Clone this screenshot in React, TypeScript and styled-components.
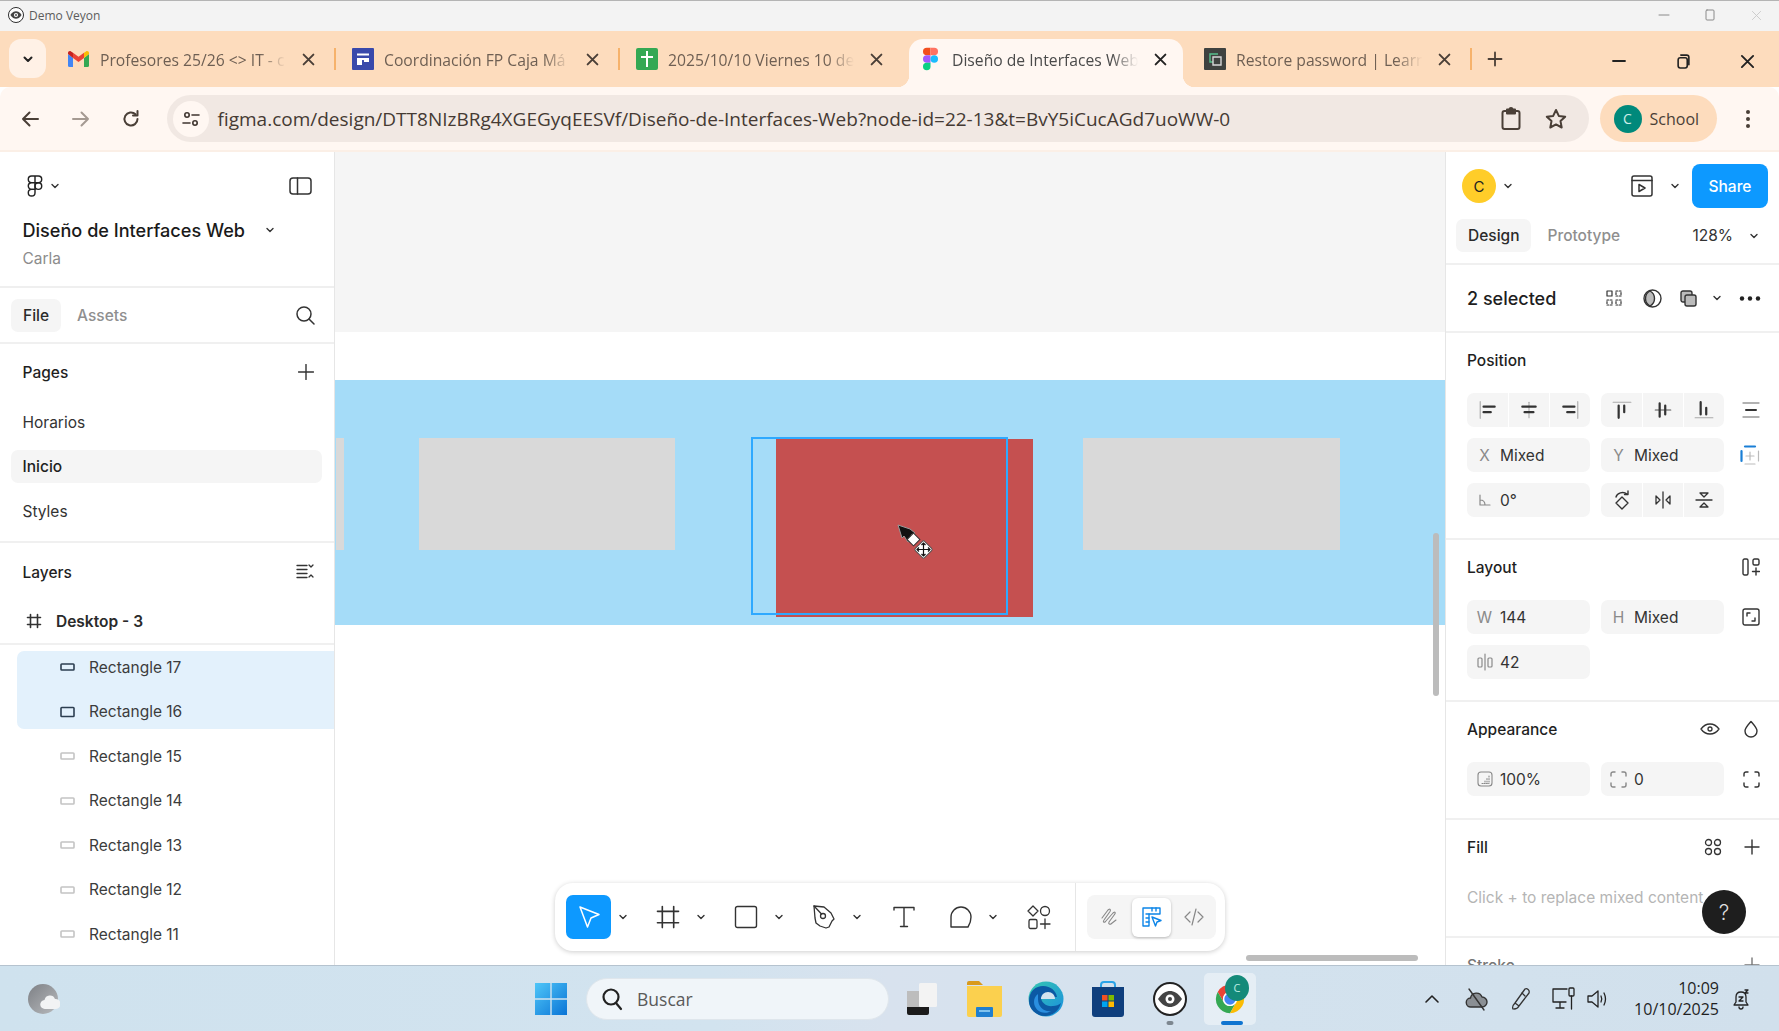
import React from "react";
import styled, { createGlobalStyle } from "styled-components";

const Global = createGlobalStyle`
  html, body { margin: 0; padding: 0; overflow: hidden; background: #fff; }
  * { box-sizing: border-box; }
  svg { display: block; flex-shrink: 0; }
`;

const Page = styled.div`
  width: 1779px; height: 1031px; display: flex; flex-direction: column; overflow: hidden;
  font-family: Inter, "Liberation Sans", sans-serif; color: #1e1e1e;
`;

/* ---------- window title ---------- */
const TitleBar = styled.div`
  height: 31px; flex: none; background: #f3f3f3; border-top: 1px solid #b4b4b4;
  display: flex; align-items: center; padding: 0 0 2px 8px;
  font: 12px "Open Sans", sans-serif; color: #5c5c5c;
`;
const TitleText = styled.span` margin-left: 5px; `;
const TitleControls = styled.div` margin-left: auto; display: flex; `;
const TitleControl = styled.div`
  width: 46px; height: 24px; display: flex; align-items: center; justify-content: center;
`;

/* ---------- tabs ---------- */
const TabStrip = styled.div`
  height: 56px; flex: none; background: #fddcbd; display: flex; align-items: flex-end;
  padding-left: 9px; font-family: "Open Sans", sans-serif;
`;
const TabListButton = styled.div`
  width: 37px; height: 39px; margin: 0 5px 9px 0; border-radius: 12px; background: #fff1e6;
  display: flex; align-items: center; justify-content: center;
`;
const Tab = styled.div<{ $active?: boolean; $sep?: boolean }>`
  position: relative; height: 48px; padding-bottom: 8px; display: flex; align-items: center;
  width: ${p => (p.$active ? 274 : 284)}px;
  padding-left: ${p => (p.$active ? 11 : 17)}px;
  margin: ${p => (p.$active ? "0 4px 0 6px" : "0")};
  background: ${p => (p.$active ? "#fff7f2" : "transparent")};
  border-radius: ${p => (p.$active ? "14px 14px 0 0" : "0")};
  ${p => p.$sep && `&::after { content: ""; position: absolute; right: -1px; top: 9px; width: 2px; height: 22px; background: #f6b26b; }`}
  ${p => p.$active && `
    &::before { content: ""; position: absolute; left: -12px; bottom: 0; width: 12px; height: 12px;
      background: radial-gradient(circle at 0 0, transparent 12px, #fff7f2 12.5px); }
    &::after { content: ""; position: absolute; right: -12px; bottom: 0; width: 12px; height: 12px;
      background: radial-gradient(circle at 100% 0, transparent 12px, #fff7f2 12.5px); }
  `}
`;
const TabIconSlot = styled.div`
  width: 21px; height: 22px; margin-right: 11px; display: flex; align-items: center; justify-content: center;
`;
const TabLabel = styled.div<{ $active?: boolean }>`
  width: 190px; margin-right: 8px; padding-top: 2px; white-space: nowrap; overflow: hidden; font-size: 15.7px;
  color: ${p => (p.$active ? "#4a4a4a" : "#6e5f53")};
  -webkit-mask-image: linear-gradient(to right, #000 84%, transparent 98%);
  mask-image: linear-gradient(to right, #000 84%, transparent 98%);
`;
const TabClose = styled.div` width: 20px; display: flex; justify-content: center; `;
const NewTab = styled.div`
  width: 48px; height: 48px; padding-bottom: 8px; display: flex; align-items: center; justify-content: center;
`;
const WindowControls = styled.div` margin-left: auto; display: flex; align-self: stretch; `;
const WindowControl = styled.div`
  width: 64px; height: 100%; padding-top: 4px; display: flex; align-items: center; justify-content: center;
`;

/* ---------- address bar ---------- */
const NavBar = styled.div`
  height: 65px; flex: none; background: #fff7f2; border-bottom: 2px solid #fbefe6;
  display: flex; align-items: center; padding-left: 5px; font-family: "Open Sans", sans-serif;
  border-radius: 10px 10px 0 0;
`;
const NavButton = styled.div`
  width: 50.5px; display: flex; justify-content: center;
`;
const AddressPill = styled.div`
  width: 1422px; height: 47px; margin-left: 10px; border-radius: 24px; background: #f1e8e3;
  display: flex; align-items: center; padding: 0 21px 0 6px;
`;
const SiteInfo = styled.div`
  width: 36px; height: 36px; border-radius: 50%; background: #fff7f2;
  display: flex; align-items: center; justify-content: center; margin-right: 9px;
`;
const UrlText = styled.div`
  font-size: 19px; color: #453a33; white-space: nowrap;
`;
const AddressActions = styled.div` margin-left: auto; display: flex; gap: 21px; `;
const ProfilePill = styled.div`
  width: 117px; height: 47px; margin-left: 11px; border-radius: 24px; background: #fddcbd;
  display: flex; align-items: center; padding-left: 14px; gap: 8px; font-size: 16px; color: #4a3f37;
`;
const ProfileAvatar = styled.div`
  width: 28px; height: 28px; border-radius: 50%; background: #00897b; color: #cdeee8;
  display: flex; align-items: center; justify-content: center; font-size: 14px;
`;
const MoreButton = styled.div` flex: 1; display: flex; justify-content: center; `;

/* ---------- workspace ---------- */
const Workspace = styled.div` height: 813px; flex: none; display: flex; overflow: hidden; `;

const Sidebar = styled.aside`
  width: 335px; flex: none; border-right: 1px solid #e6e6e6; background: #fff; font-size: 15.5px;
`;
const SidebarHeader = styled.div`
  height: 136px; border-bottom: 2px solid #efefef; padding: 14px 22.5px 0;
`;
const LogoRow = styled.div` height: 40px; display: flex; align-items: center; padding-left: 4px; `;
const LogoCaretGap = styled.div` width: 7px; `;
const TitleCaretGap = styled.div` width: 20px; `;
const Spacer = styled.div` flex: 1; `;
const FileTitleRow = styled.div`
  height: 28px; margin-top: 10px; display: flex; align-items: center; font-size: 18.1px; font-weight: 500; color: #1a1a1a;
`;
const FileOwner = styled.div` height: 24px; margin-top: 3px; line-height: 24px; font-size: 15.5px; color: #8c8c8c; `;
const SidebarTabs = styled.div`
  height: 56px; border-bottom: 2px solid #f0f0f0; padding: 0 19px 0 11px; display: flex; align-items: center; gap: 4px;
`;
const PanelTab = styled.div<{ $active?: boolean }>`
  height: 33px; padding: 0 12px; border-radius: 7px; display: flex; align-items: center;
  font-size: 15.5px; font-weight: 500;
  background: ${p => (p.$active ? "#f5f5f5" : "transparent")};
  color: ${p => (p.$active ? "#2b2b2b" : "#8f8f8f")};
`;
const PagesSection = styled.div` height: 199px; border-bottom: 2px solid #f0f0f0; `;
const SectionHeader = styled.div<{ $h: number }>`
  height: ${p => p.$h}px; padding: 0 20px 0 22.5px; display: flex; align-items: center; justify-content: space-between;
  font-weight: 500; color: #1f1f1f;
`;
const PageRow = styled.div` height: 44.5px; padding: 0 12px 0 11px; display: flex; align-items: center; `;
const PageLabel = styled.div<{ $active?: boolean }>`
  flex: 1; height: 33px; padding-left: 11.5px; border-radius: 7px; display: flex; align-items: center;
  background: ${p => (p.$active ? "#f5f5f5" : "transparent")};
  font-weight: ${p => (p.$active ? 500 : 400)};
  color: ${p => (p.$active ? "#1f1f1f" : "#333")};
`;
const FrameRow = styled.div`
  height: 44px; padding: 0 0 2px 26px; border-bottom: 2px solid #f0f0f0; display: flex; align-items: center; gap: 14px;
  font-weight: 600; color: #2a2a2a;
`;
const SelectedGroup = styled.div`
  height: 78px; margin: 5.5px 0 5.5px 17px; background: #e3f1fc; border-radius: 7px 0 0 7px;
  display: flex; flex-direction: column; justify-content: center;
`;
const LayerRow = styled.div<{ $inGroup?: boolean }>`
  height: 44.5px; flex: none; display: flex; align-items: center; gap: 14px; color: #3c3c3c;
  padding-left: ${p => (p.$inGroup ? 43 : 60)}px;
`;

/* ---------- canvas ---------- */
const Canvas = styled.main` flex: 1; position: relative; overflow: hidden; background: #fff; display: flex; flex-direction: column; `;
const OutOfFrame = styled.div` height: 180px; flex: none; background: #f5f5f5; `;
const FrameGap = styled.div` height: 48px; flex: none; background: #fff; `;
const BlueBand = styled.div` height: 245px; flex: none; background: #a5dcf8; `;
const CanvasRect = styled.div<{ $x: number; $y: number; $w: number; $h: number; $fill: string }>`
  position: absolute; left: ${p => p.$x}px; top: ${p => p.$y}px; width: ${p => p.$w}px; height: ${p => p.$h}px;
  background: ${p => p.$fill};
`;
const SelectionBox = styled.div`
  position: absolute; left: 416px; top: 285px; width: 257px; height: 178px; border: 2px solid #2ea9ff;
`;
const DragCursor = styled.div` position: absolute; left: 560px; top: 370px; `;
const ScrollV = styled.div`
  position: absolute; left: 1098px; top: 381px; width: 6px; height: 163px; border-radius: 3px; background: #bcbcbc;
`;
const ScrollH = styled.div`
  position: absolute; left: 911px; top: 803px; width: 172px; height: 6px; border-radius: 3px; background: #bcbcbc;
`;

const ToolBar = styled.div`
  position: absolute; left: 220px; top: 731px; width: 670px; height: 68px; background: #fff; border-radius: 18px;
  box-shadow: 0 1px 5px rgba(0,0,0,.2); display: flex; align-items: center; padding-left: 11px; gap: 16px;
`;
const ToolGroup = styled.div` display: flex; align-items: center; gap: 4px; `;
const Tool = styled.div<{ $active?: boolean; $nudge?: number }>`
  width: ${p => (p.$active ? 45 : 42)}px; height: 44px; border-radius: 7px;
  background: ${p => (p.$active ? "#0d99ff" : "transparent")};
  display: flex; align-items: center; justify-content: center;
  padding-left: ${p => p.$nudge ?? 0}px;
`;
const ToolCaret = styled.div` width: 16px; display: flex; justify-content: center; `;
const ModeSection = styled.div`
  margin-left: auto; height: 100%; border-left: 1px solid #e6e6e6; padding: 0 13px 0 11px; display: flex; align-items: center;
`;
const ModeSwitch = styled.div`
  width: 129px; height: 44px; background: #f5f5f5; border-radius: 8px; display: flex; align-items: center; justify-content: space-between; padding: 0 3px;
`;
const ModeItem = styled.div<{ $active?: boolean }>`
  width: 39px; height: 39px; border-radius: 6px; display: flex; align-items: center; justify-content: center;
  background: ${p => (p.$active ? "#fff" : "transparent")};
  box-shadow: ${p => (p.$active ? "0 1px 3px rgba(0,0,0,.25)" : "none")};
`;

/* ---------- right panel ---------- */
const RightPanel = styled.aside`
  width: 334px; flex: none; border-left: 1px solid #e6e6e6; background: #fff; position: relative; font-size: 15.5px;
  display: flex; flex-direction: column;
`;
const PanelTop = styled.div`
  height: 68px; flex: none; display: flex; align-items: center; padding: 0 11px 0 16px;
`;
const UserAvatar = styled.div`
  width: 34px; height: 34px; border-radius: 50%; background: #ffcd29; display: flex; align-items: center; justify-content: center;
  font-size: 15px; color: #222; margin-right: 7px;
`;
const PresentButton = styled.div` margin-left: auto; margin-right: 17px; `;
const ShareButton = styled.div`
  width: 76px; height: 44px; margin-left: 12px; border-radius: 8px; background: #0d99ff; color: #fff;
  display: flex; align-items: center; justify-content: center; font-size: 15.5px; font-weight: 500;
`;
const PanelTabs = styled.div`
  height: 45px; flex: none; border-bottom: 2px solid #f0f0f0; padding: 0 20px 12px 10px; display: flex; align-items: center; gap: 4px;
`;
const ZoomValue = styled.div` margin-left: auto; display: flex; align-items: center; gap: 16px; color: #333; `;
const SelectedRow = styled.div`
  height: 68px; flex: none; border-bottom: 2px solid #f0f0f0; display: flex; align-items: center; padding: 0 18px 0 21px;
  font-size: 18px; font-weight: 500;
`;
const SelectedActions = styled.div` margin-left: auto; display: flex; align-items: center; gap: 18px; `;
const ActionCaret = styled.div` display: flex; margin-left: -3px; margin-right: -1px; `;
const PropSection = styled.section<{ $h: number }>`
  height: ${p => p.$h}px; flex: none; border-bottom: 2px solid #f0f0f0; padding: 0 19px 0 21px;
`;
const PropTitle = styled.div`
  height: 54px; margin-bottom: 6px; display: flex; align-items: center; justify-content: space-between; font-weight: 500; color: #1f1f1f;
`;
const HeaderIcons = styled.div` display: flex; align-items: center; gap: 22px; `;
const PropGrid = styled.div`
  display: grid; grid-template-columns: 123px 123px 1fr; grid-auto-rows: 34px; gap: 11px; align-items: center;
`;
const Field = styled.div`
  height: 34px; background: #f5f5f5; border-radius: 7px; display: flex; align-items: center; color: #333;
`;
const FieldLabel = styled.div`
  width: 33px; flex: none; display: flex; justify-content: center; padding-left: 2px; color: #8a8a8a;
`;
const ButtonGroup = styled.div`
  height: 34px; background: #f5f5f5; border-radius: 7px; display: grid; grid-template-columns: repeat(3, 1fr);
`;
const GroupCell = styled.div`
  display: flex; align-items: center; justify-content: center; border-left: 1px solid #fff;
  &:first-child { border-left: 0; }
`;
const EndIcon = styled.div` display: flex; justify-content: flex-end; `;
const PlaceholderText = styled.div`
  height: 34px; display: flex; align-items: center; color: #b5b5b5; white-space: nowrap;
`;
const HelpButton = styled.div`
  position: absolute; left: 256px; top: 738px; width: 44px; height: 44px; border-radius: 50%; background: #1e1e1e;
  color: #ddd; display: flex; align-items: center; justify-content: center; font-size: 21px; font-weight: 300;
`;
const StrokeTitle = styled(PropTitle)` color: #777; `;

/* ---------- taskbar ---------- */
const TaskBar = styled.footer`
  height: 66px; flex: none; border-top: 1px solid #b5c3cf;
  background: linear-gradient(90deg, #cfe2ee 0%, #d2e3ef 40%, #d8e2ee 50%, #d3e2ee 70%, #d1e0ec 100%);
  display: flex; align-items: center; font-family: "Open Sans", sans-serif; position: relative;
`;
const WeatherSlot = styled.div` margin-left: 28px; width: 32px; margin-right: 475px; `;
const StartSlot = styled.div` width: 32px; margin-right: 19px; `;
const SearchPill = styled.div`
  width: 303px; height: 42px; margin-right: 2px; border-radius: 21px; background: #f0f5f9; border: 1px solid #dfe6ec; display: flex; align-items: center;
  padding-left: 13px; gap: 13px; font-size: 17.5px; color: #5a5a5a;
`;
const TaskSlot = styled.div`
  position: relative; width: 62px; height: 52px; display: flex; align-items: center; justify-content: center;
`;
const ActiveTile = styled.div`
  position: absolute; left: 3px; top: 0; width: 52px; height: 52px; border-radius: 5px; background: rgba(255,255,255,.42);
`;
const Indicator = styled.div<{ $w: number; $c: string }>`
  position: absolute; bottom: 0; left: 50%; transform: translateX(-50%); width: ${p => p.$w}px; height: 4px; border-radius: 2px; background: ${p => p.$c};
`;
const ChromeBadge = styled.div`
  position: absolute; left: 24px; top: 2px; width: 24px; height: 26px; border-radius: 50%; background: #148a79; color: #bdeee4;
  font-size: 11px; display: flex; align-items: center; justify-content: center;
`;
const IconLayer = styled.div` position: relative; margin-left: -4px; `;
const Tray = styled.div` position: absolute; left: 1409px; top: 0; height: 100%; display: flex; align-items: center; `;
const TraySlot = styled.div<{ $w: number }>` width: ${p => p.$w}px; display: flex; justify-content: center; `;
const Clock = styled.div`
  width: 110px; text-align: right; font-size: 16px; line-height: 21px; color: #1f1f1f;
`;

/* ---------- icons ---------- */
type P = { s?: number; c?: string; w?: number; vb?: string; children?: React.ReactNode; h?: number };
const Ic = ({ s = 20, h, c = "#333", w = 1.5, vb = "0 0 20 20", children }: P) => (
  <svg width={s} height={h ?? s} viewBox={vb} fill="none" stroke={c} strokeWidth={w} strokeLinecap="round" strokeLinejoin="round">{children}</svg>
);
const Caret = ({ c = "#333" }: { c?: string }) => (
  <Ic s={10} c={c} vb="0 0 10 10" w={1.4}><path d="M2 3.5 5 6.5 8 3.5" /></Ic>
);
const Cross = ({ s = 13, c = "#4a3f37", w = 1.8 }: { s?: number; c?: string; w?: number }) => (
  <Ic s={s} c={c} w={w} vb="0 0 12 12"><path d="M1.5 1.5 10.5 10.5M10.5 1.5 1.5 10.5" /></Ic>
);
const Gmail = () => (
  <svg width="21" height="16" viewBox="0 0 21 16">
    <path d="M0 3v11.5A1.5 1.5 0 0 0 1.500 16H5V7z" fill="#4285f4" />
    <path d="M21 3v11.5a1.500 1.500 0 0 1-1.500 1.500H16V7z" fill="#34a853" />
    <path d="M0 3 5 7V1.800L3 .4C1.600-.5 0 .5 0 2z" fill="#c5221f" />
    <path d="M5 1.800V7l5.500 4L16 7V1.800l-5.500 4z" fill="#ea4335" />
    <path d="M16 1.800V7l5-4V2c0-1.500-1.600-2.500-3-1.600z" fill="#fbbc04" />
  </svg>
);
const FormsFav = () => (
  <svg width="22" height="22" viewBox="0 0 22 22"><rect width="22" height="22" rx="1" fill="#3949ab" /><path d="M5 5.500h12v2H5zM5 10h12v2.300H5zM5 10h5v7H5zM12 10h5v4h-5z" fill="#fff" /><rect x="10" y="12.300" width="2" height="5" fill="#3949ab" /></svg>
);
const SheetFav = () => (
  <svg width="22" height="22" viewBox="0 0 22 22"><rect width="22" height="22" rx="2" fill="#34a853" /><path d="M10 3h2v5h5v2h-5v9h-2v-9H5V8h5z" fill="#fff" /></svg>
);
const FigmaFav = () => (
  <svg width="15" height="24" viewBox="0 0 16 24">
    <path d="M8 0H4a4 4 0 0 0 0 8h4z" fill="#f24e1e" />
    <path d="M8 0h4a4 4 0 0 1 0 8H8z" fill="#ff7262" />
    <path d="M8 8H4a4 4 0 0 0 0 8h4z" fill="#a259ff" />
    <circle cx="12" cy="12" r="4" fill="#1abcfe" />
    <path d="M4 16h4v4a4 4 0 1 1-4-4z" fill="#0acf83" />
  </svg>
);
const LearnFav = () => (
  <svg width="22" height="22" viewBox="0 0 22 22"><rect width="22" height="22" rx="1" fill="#3f4240" /><path d="M14 6H6v8h3" fill="none" stroke="#58c08d" strokeWidth="1.400" /><path d="M9 9h8v8H9z" fill="none" stroke="#d7d7d7" strokeWidth="1.400" /></svg>
);
const FigmaOutline = () => (
  <Ic s={16} h={23} c="#222" vb="0 0 16 24" w={1.5}>
    <path d="M8 1H4.500a3.500 3.500 0 0 0 0 7H8zM8 1h3.500a3.500 3.500 0 0 1 0 7H8zM8 8H4.500a3.500 3.500 0 0 0 0 7H8z" />
    <circle cx="11.500" cy="11.500" r="3.500" />
    <path d="M4.500 15H8v3.500a3.500 3.500 0 1 1-3.500-3.500z" />
  </Ic>
);
const LayerRect = ({ dark, tall }: { dark?: boolean; tall?: boolean }) => (
  <Ic s={15} h={12} c={dark ? "#2c3e50" : "#c4c4c4"} w={1.6} vb="0 0 15 12"><rect x="1" y={tall ? 1.5 : 3} width="13" height={tall ? 9 : 6} rx="0.8" /></Ic>
);
const Hash = ({ s = 18, c = "#333", w = 1.6 }: { s?: number; c?: string; w?: number }) => (
  <Ic s={s} c={c} w={w} vb="0 0 16 16"><path d="M4.500 1.500v13M11.500 1.500v13M1.500 4.500h13M1.500 11.500h13" /></Ic>
);
const AlignBar = ({ kind }: { kind: string }) => {
  const t: Record<string, React.ReactNode> = {
    left: <><path d="M2 1.500v15" stroke="#aaa" /><path d="M5 6h10M5 11h6.500" strokeWidth="2" /></>,
    cx: <><path d="M9 2v14" stroke="#aaa" /><path d="M3 6h12M5 11h8" strokeWidth="2" /></>,
    right: <><path d="M16 1.500v15" stroke="#aaa" /><path d="M3 6h10M6.500 11H13" strokeWidth="2" /></>,
    top: <><path d="M1 2h16" stroke="#aaa" /><path d="M6 5v11M11 5v6" strokeWidth="2" /></>,
    cy: <><path d="M2 9h14" stroke="#555" /><path d="M6 3v12M11 5v8" strokeWidth="2" /></>,
    bottom: <><path d="M1 16h16" stroke="#aaa" /><path d="M6 2v11M11 7v6" strokeWidth="2" /></>,
  };
  return <Ic s={20} c="#333" w={1} vb="0 0 18 18">{t[kind]}</Ic>;
};
const ChromeIcon = () => (
  <svg width="34" height="34" viewBox="0 0 48 48">
    <path d="M24 4A20 20 0 0 1 41.320 14H24A10 10 0 0 0 15.340 29L6.680 14A20 20 0 0 1 24 4Z" fill="#ea4335" />
    <path d="M6.680 14 15.340 29A10 10 0 0 0 32.660 29L24 44A20 20 0 0 1 6.680 14Z" fill="#34a853" />
    <path d="M24 44 32.660 29A10 10 0 0 0 24 14H41.320A20 20 0 0 1 24 44Z" fill="#fbbc04" />
    <circle cx="24" cy="24" r="10" fill="#fff" /><circle cx="24" cy="24" r="8" fill="#4285f4" />
  </svg>
);
const VeyonEye = ({ s = 34 }: { s?: number }) => (
  <svg width={s} height={s} viewBox="0 0 34 34">
    <circle cx="17" cy="17" r="16" fill="#fff" stroke="#222" strokeWidth="2" />
    <path d="M5 17c4-6 8-8 12-8s8 2 12 8c-4 6-8 8-12 8s-8-2-12-8z" fill="#444" />
    <circle cx="17" cy="17" r="4.500" fill="#fff" /><circle cx="17" cy="17" r="2" fill="#444" />
  </svg>
);

const tabs = [
  { icon: <Gmail />, label: "Profesores 25/26 <> IT - c", sep: true },
  { icon: <FormsFav />, label: "Coordinación FP Caja Má", sep: true },
  { icon: <SheetFav />, label: "2025/10/10 Viernes 10 de", sep: false },
  { icon: <FigmaFav />, label: "Diseño de Interfaces Web", active: true },
  { icon: <LearnFav />, label: "Restore password | Learni", sep: true },
];
const layers = [15, 14, 13, 12, 11];

export default function App() {
  return (
    <Page>
      <Global />
      <TitleBar>
        <VeyonEye s={16} />
        <TitleText>Demo Veyon</TitleText>
        <TitleControls>
          <TitleControl><Ic s={12} c="#8a8a8a" w={1} vb="0 0 12 12"><path d="M1 6h10" /></Ic></TitleControl>
          <TitleControl><Ic s={12} c="#8a8a8a" w={1} vb="0 0 12 12"><rect x="2" y="1" width="8" height="10" rx="1" /></Ic></TitleControl>
          <TitleControl><Cross s={11} c="#c9c9c9" w={1} /></TitleControl>
        </TitleControls>
      </TitleBar>

      <TabStrip>
        <TabListButton><Ic s={12} c="#222" w={2} vb="0 0 12 12"><path d="M2.500 4.500 6 8l3.500-3.500" /></Ic></TabListButton>
        {tabs.map(t => (
          <Tab key={t.label} $active={t.active} $sep={t.sep}>
            <TabIconSlot>{t.icon}</TabIconSlot>
            <TabLabel $active={t.active}>{t.label}</TabLabel>
            <TabClose><Cross c={t.active ? "#222" : "#4a3f37"} /></TabClose>
          </Tab>
        ))}
        <NewTab><Ic s={16} c="#4a3f37" w={1.8} vb="0 0 16 16"><path d="M8 1.500v13M1.500 8h13" /></Ic></NewTab>
        <WindowControls>
          <WindowControl><Ic s={14} c="#222" w={1.8} vb="0 0 14 14"><path d="M1 7h12" /></Ic></WindowControl>
          <WindowControl><Ic s={15} c="#222" w={1.5} vb="0 0 14 14"><rect x="2" y="3.500" width="8.500" height="9.500" rx="2" /><path d="M4.500 1h5.500a2 2 0 0 1 2 2v7" /></Ic></WindowControl>
          <WindowControl><Cross s={15} c="#222" w={1.5} /></WindowControl>
        </WindowControls>
      </TabStrip>

      <NavBar>
        <NavButton><Ic s={20} c="#4a3f37" w={2} vb="0 0 20 20"><path d="M18 10H3M9.500 3.500 3 10l6.500 6.500" /></Ic></NavButton>
        <NavButton><Ic s={20} c="#a59a92" w={2} vb="0 0 20 20"><path d="M2 10h15M10.500 3.500 17 10l-6.500 6.500" /></Ic></NavButton>
        <NavButton><Ic s={20} c="#4a3f37" w={2} vb="0 0 20 20"><path d="M16.500 10a6.500 6.500 0 1 1-2-4.700" /><path d="M16.500 2v4.500H12" /></Ic></NavButton>
        <AddressPill>
          <SiteInfo>
            <Ic s={20} c="#3f352f" w={1.6} vb="0 0 20 20"><circle cx="6" cy="6" r="2.200" /><path d="M11 6h7M2 14h7" /><circle cx="14" cy="14" r="2.200" /></Ic>
          </SiteInfo>
          <UrlText>figma.com/design/DTT8NIzBRg4XGEGyqEESVf/Diseño-de-Interfaces-Web?node-id=22-13&amp;t=BvY5iCucAGd7uoWW-0</UrlText>
          <AddressActions>
            <Ic s={24} c="#4a3f37" w={2} vb="0 0 24 24"><rect x="3.500" y="4" width="17" height="18" rx="2" /><path d="M8 4V2.500h2.500a1.500 1.500 0 0 1 3 0H16V6.500H8z" fill="#4a3f37" /></Ic>
            <Ic s={24} c="#4a3f37" w={2} vb="0 0 24 24"><path d="m12 3 2.800 5.900 6.400.8-4.700 4.400 1.200 6.400L12 17.400l-5.700 3.100 1.200-6.400-4.700-4.400 6.400-.8z" /></Ic>
          </AddressActions>
        </AddressPill>
        <ProfilePill><ProfileAvatar>C</ProfileAvatar>School</ProfilePill>
        <MoreButton>
          <svg width="4" height="20" viewBox="0 0 4 20" fill="#4a3f37"><circle cx="2" cy="3" r="2" /><circle cx="2" cy="10" r="2" /><circle cx="2" cy="17" r="2" /></svg>
        </MoreButton>
      </NavBar>

      <Workspace>
        <Sidebar>
          <SidebarHeader>
            <LogoRow>
              <FigmaOutline />
              <LogoCaretGap />
              <Caret />
              <Spacer />
              <Ic s={23} h={18} c="#333" w={1.5} vb="0 0 23 18"><rect x="1" y="1" width="21" height="16" rx="3" /><path d="M8.500 1v16" /></Ic>
            </LogoRow>
            <FileTitleRow>Diseño de Interfaces Web<TitleCaretGap /><Caret /></FileTitleRow>
            <FileOwner>Carla</FileOwner>
          </SidebarHeader>
          <SidebarTabs>
            <PanelTab $active>File</PanelTab>
            <PanelTab>Assets</PanelTab>
            <Spacer />
            <Ic s={20} c="#333" w={1.5} vb="0 0 20 20"><circle cx="9" cy="9" r="7" /><path d="m14 14 5 5" /></Ic>
          </SidebarTabs>
          <PagesSection>
            <SectionHeader $h={56}>Pages<Ic s={16} c="#333" w={1.4} vb="0 0 16 16"><path d="M8 .500v15M.5 8h15" /></Ic></SectionHeader>
            <PageRow><PageLabel>Horarios</PageLabel></PageRow>
            <PageRow><PageLabel $active>Inicio</PageLabel></PageRow>
            <PageRow><PageLabel>Styles</PageLabel></PageRow>
          </PagesSection>
          <SectionHeader $h={58}>
            Layers
            <Ic s={18} c="#333" w={1.3} vb="0 0 18 18"><path d="M1 2.500h10M1 6.500h10M1 10.500h10M1 14.500h10M13 2l2 2 2-2M13 14l2-2 2 2" /></Ic>
          </SectionHeader>
          <FrameRow><Hash s={16} c="#333" />Desktop - 3</FrameRow>
          <SelectedGroup>
            <LayerRow $inGroup><LayerRect dark />Rectangle 17</LayerRow>
            <LayerRow $inGroup><LayerRect dark tall />Rectangle 16</LayerRow>
          </SelectedGroup>
          {layers.map(n => <LayerRow key={n}><LayerRect />Rectangle {n}</LayerRow>)}
        </Sidebar>

        <Canvas>
          <OutOfFrame />
          <FrameGap />
          <BlueBand />
          <CanvasRect $x={1} $y={286} $w={8} $h={112} $fill="#d9d9d9" />
          <CanvasRect $x={84} $y={286} $w={256} $h={112} $fill="#d9d9d9" />
          <CanvasRect $x={748} $y={286} $w={257} $h={112} $fill="#d9d9d9" />
          <CanvasRect $x={441} $y={287} $w={257} $h={178} $fill="#c55050" />
          <SelectionBox />
          <DragCursor>
            <svg width="40" height="40" viewBox="0 0 40 40">
              <path d="M3 3 15 7l5 4-4 2 2 5-5 2-4-6-2 2z" fill="#111" stroke="#999" strokeWidth="1" />
              <rect x="14" y="13" width="9" height="9" transform="rotate(45 18.500 17.500)" fill="#fff" stroke="#333" strokeWidth="1" />
              <rect x="22" y="21" width="13" height="13" transform="rotate(45 28.500 27.500)" rx="1.500" fill="#fff" stroke="#555" strokeWidth="1" />
              <path d="M28.500 21v13M22 27.500h13M26.500 23l2-2 2 2M26.500 32l2 2 2-2M24 25.500l-2 2 2 2M33 25.500l2 2-2 2" fill="none" stroke="#111" strokeWidth="1.200" />
            </svg>
          </DragCursor>
          <ScrollV />
          <ScrollH />
          <ToolBar>
            <ToolGroup>
              <Tool $active><Ic s={28} c="#fff" w={1.5} vb="0 0 28 28"><path d="M5 4 24 11.500l-8 3.500-3.500 9z" /></Ic></Tool>
              <ToolCaret><Caret /></ToolCaret>
            </ToolGroup>
            <ToolGroup>
              <Tool><Hash s={26} c="#333" w={1} /></Tool>
              <ToolCaret><Caret /></ToolCaret>
            </ToolGroup>
            <ToolGroup>
              <Tool><Ic s={24} c="#333" w={1.4} vb="0 0 24 24"><rect x="1.500" y="1.500" width="21" height="21" rx="2" /></Ic></Tool>
              <ToolCaret><Caret /></ToolCaret>
            </ToolGroup>
            <ToolGroup>
              <Tool><Ic s={26} c="#333" w={1.3} vb="0 0 26 26"><path d="m3 2 10 1 7 6 3 6-2 2-3 6-3 1-6-2-4-3-1-5z" /><circle cx="12" cy="12" r="2.500" /><path d="M3 2l7.500 8" /></Ic></Tool>
              <ToolCaret><Caret /></ToolCaret>
            </ToolGroup>
            <ToolGroup>
              <Tool $nudge={4}><Ic s={24} c="#333" w={1.4} vb="0 0 24 24"><path d="M2 5V2.500h20V5M12 2.500v19M8.500 21.500h7" /></Ic></Tool>
            </ToolGroup>
            <ToolGroup>
              <Tool $nudge={2}><Ic s={24} c="#333" w={1.4} vb="0 0 24 24"><path d="M2 22V12A10 10 0 0 1 12 2a10 10 0 0 1 10 10c0 4-1 7-3 10z" /></Ic></Tool>
              <ToolCaret><Caret /></ToolCaret>
            </ToolGroup>
            <ToolGroup>
              <Tool $nudge={2}><Ic s={26} c="#333" w={1.3} vb="0 0 26 26"><path d="m7 2 5 5-5 5-5-5z" /><circle cx="19" cy="7" r="4.500" /><rect x="3" y="15.500" width="8" height="9" rx="1.500" /><path d="M19 15v9.500M14.500 20h9.500" /></Ic></Tool>
            </ToolGroup>
            <ModeSection>
              <ModeSwitch>
                <ModeItem><Ic s={22} c="#888" w={1.1} vb="0 0 22 22"><path d="M3 12 9 4c2-2 3 0 2 1.500L5 14c-1.500 2 0 3 1.500 1.500L14 7c2-2 3 0 1.500 1.500L10 16c-1 2 1 3 2.500 1.500L17 14" /></Ic></ModeItem>
                <ModeItem $active>
                  <Ic s={24} c="#0d85e8" w={1.4} vb="0 0 24 24"><path d="M3 3h17v6H9v12H3z" /><path d="M6 9h3M6 13h3M6 17h3M12 3v3M16 3v3M12 12l9 3.500-4 1.500-1.500 4z" /></Ic>
                </ModeItem>
                <ModeItem><Ic s={22} c="#888" w={1.2} vb="0 0 22 22"><path d="M7 6 2 11l5 5M15 6l5 5-5 5M13 3 9 19" /></Ic></ModeItem>
              </ModeSwitch>
            </ModeSection>
          </ToolBar>
        </Canvas>

        <RightPanel>
          <PanelTop>
            <UserAvatar>C</UserAvatar>
            <Caret />
            <PresentButton>
              <Ic s={22} c="#333" w={1.5} vb="0 0 22 22"><rect x="1" y="1" width="20" height="20" rx="2" /><path d="M1 5.500h20M8 9.500l6 3.500-6 3.500z" /></Ic>
            </PresentButton>
            <Caret />
            <ShareButton>Share</ShareButton>
          </PanelTop>
          <PanelTabs>
            <PanelTab $active>Design</PanelTab>
            <PanelTab>Prototype</PanelTab>
            <ZoomValue>128%<Caret /></ZoomValue>
          </PanelTabs>
          <SelectedRow>
            2 selected
            <SelectedActions>
              <Ic s={18} c="#333" w={1.2} vb="0 0 18 18"><rect x="2" y="2" width="5" height="5" /><path d="M11 2h5v5h-5zM2 11h5v5H2zM11 11h5v5h-5z" strokeDasharray="1.800 1.500" /></Ic>
              <Ic s={21} c="#333" w={1.4} vb="0 0 21 21"><circle cx="11.500" cy="10.500" r="8.500" /><path d="M9 3a8.500 8.500 0 0 0 0 15 8.500 8.500 0 0 0 0-15z" fill="#bbb" /></Ic>
              <Ic s={17} c="#333" w={1.4} vb="0 0 17 17"><rect x="1" y="1" width="11" height="11" rx="2" fill="#bbb" /><rect x="5" y="5" width="11" height="11" rx="2" fill="#bbb" /></Ic>
              <ActionCaret><Caret /></ActionCaret>
              <svg width="22" height="5" viewBox="0 0 22 5" fill="#222"><circle cx="3" cy="2.500" r="2.200" /><circle cx="11" cy="2.500" r="2.200" /><circle cx="19" cy="2.500" r="2.200" /></svg>
            </SelectedActions>
          </SelectedRow>

          <PropSection $h={207}>
            <PropTitle>Position</PropTitle>
            <PropGrid>
              <ButtonGroup>
                <GroupCell><AlignBar kind="left" /></GroupCell>
                <GroupCell><AlignBar kind="cx" /></GroupCell>
                <GroupCell><AlignBar kind="right" /></GroupCell>
              </ButtonGroup>
              <ButtonGroup>
                <GroupCell><AlignBar kind="top" /></GroupCell>
                <GroupCell><AlignBar kind="cy" /></GroupCell>
                <GroupCell><AlignBar kind="bottom" /></GroupCell>
              </ButtonGroup>
              <EndIcon><Ic s={18} c="#333" w={1.3} vb="0 0 18 18"><path d="M1 2h16M1 16h16" stroke="#999" /><path d="M4 9h10" strokeWidth="2" /></Ic></EndIcon>
              <Field><FieldLabel>X</FieldLabel>Mixed</Field>
              <Field><FieldLabel>Y</FieldLabel>Mixed</Field>
              <EndIcon>
                <Ic s={20} c="#bbb" w={1.2} vb="0 0 20 20"><path d="M10 7v8M6 11h8M5 19h10M18.500 6v10" /><path d="M5 1.500h10" stroke="#1a7fd6" strokeWidth="2.200" /><path d="M1.500 6v10" stroke="#1a7fd6" strokeWidth="2.200" /></Ic>
              </EndIcon>
              <Field>
                <FieldLabel><Ic s={13} c="#8a8a8a" w={1.2} vb="0 0 13 13"><path d="M2 1v10h10M2 6c3 0 5 2 5 5" /></Ic></FieldLabel>0°
              </Field>
              <ButtonGroup>
                <GroupCell><Ic s={20} c="#333" w={1.4} vb="0 0 20 20"><path d="m10 7 6 6-6 6-6-6zM4 7c1-4 7-6 11-3M16 1v3.500h-3.500" /></Ic></GroupCell>
                <GroupCell><Ic s={18} c="#333" w={1.3} vb="0 0 18 18"><path d="M9 1v16M2 5v8l4-4zM16 5v8l-4-4z" /></Ic></GroupCell>
                <GroupCell><Ic s={18} c="#333" w={1.3} vb="0 0 18 18"><path d="M1 9h16M5 2h8L9 6zM5 16h8l-4-4z" /></Ic></GroupCell>
              </ButtonGroup>
            </PropGrid>
          </PropSection>

          <PropSection $h={162}>
            <PropTitle>
              Layout
              <Ic s={18} c="#333" w={1.4} vb="0 0 18 18"><rect x="1" y="1" width="5" height="16" rx="1.500" /><rect x="11" y="1" width="6" height="6" rx="1.500" /><path d="M14 10v7M10.500 13.500h7" /></Ic>
            </PropTitle>
            <PropGrid>
              <Field><FieldLabel>W</FieldLabel>144</Field>
              <Field><FieldLabel>H</FieldLabel>Mixed</Field>
              <EndIcon><Ic s={18} c="#333" w={1.4} vb="0 0 18 18"><rect x="1" y="1" width="16" height="16" rx="2" /><path d="M5 8V5h3M13 10v3h-3" /></Ic></EndIcon>
              <Field>
                <FieldLabel><Ic s={18} c="#8a8a8a" w={1.2} vb="0 0 18 18"><path d="M9 1v16" /><rect x="2" y="5" width="4" height="9" rx="1" /><rect x="12" y="5" width="4" height="9" rx="1" /></Ic></FieldLabel>42
              </Field>
            </PropGrid>
          </PropSection>

          <PropSection $h={118}>
            <PropTitle>
              Appearance
              <HeaderIcons>
                <Ic s={20} c="#333" w={1.3} vb="0 0 20 20"><path d="M1 10c2.500-3.500 5.500-5 9-5s6.500 1.500 9 5c-2.500 3.500-5.500 5-9 5s-6.500-1.500-9-5z" /><circle cx="10" cy="10" r="2" /></Ic>
                <Ic s={18} c="#333" w={1.4} vb="0 0 18 18"><path d="M9 1.500c3 3.500 6 6.500 6 9.500a6 6 0 0 1-12 0c0-3 3-6 6-9.500z" /></Ic>
              </HeaderIcons>
            </PropTitle>
            <PropGrid>
              <Field>
                <FieldLabel><Ic s={16} c="#888" w={1.1} vb="0 0 16 16"><rect x="1" y="1" width="14" height="14" rx="3" /><path d="M12 5v1M10 7.500v1M12 7.500v1M8 10v1M10 10v1M12 10v1M5 12.500h7" strokeDasharray="1 1.200" /></Ic></FieldLabel>100%
              </Field>
              <Field>
                <FieldLabel><Ic s={17} c="#888" w={1.4} vb="0 0 17 17"><path d="M1 5V3a2 2 0 0 1 2-2h2M12 1h2a2 2 0 0 1 2 2v2M16 12v2a2 2 0 0 1-2 2h-2M5 16H3a2 2 0 0 1-2-2v-2" /></Ic></FieldLabel>0
              </Field>
              <EndIcon><Ic s={17} c="#333" w={1.4} vb="0 0 17 17"><path d="M1 5V3a2 2 0 0 1 2-2h2M12 1h2a2 2 0 0 1 2 2v2M16 12v2a2 2 0 0 1-2 2h-2M5 16H3a2 2 0 0 1-2-2v-2" /></Ic></EndIcon>
            </PropGrid>
          </PropSection>

          <PropSection $h={118}>
            <PropTitle>
              Fill
              <HeaderIcons>
                <Ic s={18} c="#333" w={1.3} vb="0 0 18 18"><circle cx="4.500" cy="4.500" r="3" /><circle cx="13.500" cy="4.500" r="3" /><circle cx="4.500" cy="13.500" r="3" /><circle cx="13.500" cy="13.500" r="3" /></Ic>
                <Ic s={16} c="#333" w={1.4} vb="0 0 16 16"><path d="M8 1v14M1 8h14" /></Ic>
              </HeaderIcons>
            </PropTitle>
            <PlaceholderText>Click + to replace mixed content</PlaceholderText>
          </PropSection>

          <PropSection $h={60}>
            <StrokeTitle>
              Stroke
              <Ic s={16} c="#777" w={1.4} vb="0 0 16 16"><path d="M8 1v14M1 8h14" /></Ic>
            </StrokeTitle>
          </PropSection>

          <HelpButton>?</HelpButton>
        </RightPanel>
      </Workspace>

      <TaskBar>
        <WeatherSlot>
          <svg width="32" height="32" viewBox="0 0 32 32">
            <defs><linearGradient id="wx" x1="0" y1="0" x2="1" y2="1"><stop offset="0" stopColor="#7d8085" /><stop offset="1" stopColor="#b8babd" /></linearGradient></defs>
            <circle cx="15" cy="16" r="15" fill="url(#wx)" />
            <path d="M17 26a4.500 4.500 0 0 1-.5-9A5.500 5.500 0 0 1 27 16a5 5 0 0 1 1 10z" fill="#f2f3f4" />
          </svg>
        </WeatherSlot>
        <StartSlot>
          <svg width="32" height="32" viewBox="0 0 32 32">
            <defs><linearGradient id="win" x1="0" y1="0" x2="1" y2="1"><stop offset="0" stopColor="#4fc6f8" /><stop offset="1" stopColor="#0a74d6" /></linearGradient></defs>
            <path d="M0 0h15.300v15.300H0zM16.700 0H32v15.300H16.700zM0 16.700h15.300V32H0zM16.700 16.700H32V32H16.700z" fill="url(#win)" />
          </svg>
        </StartSlot>
        <SearchPill>
          <Ic s={24} c="#222" w={2.2} vb="0 0 24 24"><circle cx="11" cy="10" r="7.500" /><path d="m16 16 5 6" /></Ic>
          Buscar
        </SearchPill>
        <TaskSlot>
          <svg width="34" height="34" viewBox="0 0 34 34">
            <rect x="2" y="9" width="22" height="24" rx="2" fill="#1b1b1b" />
            <rect x="2" y="9" width="18" height="16" fill="#bdbdbd" />
            <rect x="14" y="1" width="18" height="24" rx="1.500" fill="#f3f3f3" />
          </svg>
        </TaskSlot>
        <TaskSlot>
          <svg width="35" height="36" viewBox="0 0 35 36">
            <path d="M0 2a2 2 0 0 1 2-2h10l4 4h-16z" fill="#d99a1c" />
            <path d="M0 5h35v29a2 2 0 0 1-2 2H2a2 2 0 0 1-2-2z" fill="#fbd04e" />
            <rect x="9" y="26" width="17" height="10" fill="#1f7fd0" rx="1" />
            <rect x="12" y="29" width="11" height="2" fill="#7fc2ee" />
          </svg>
        </TaskSlot>
        <TaskSlot>
          <svg width="36" height="36" viewBox="0 0 36 36">
            <defs><linearGradient id="edge" x1="0" y1="0" x2="1" y2="1"><stop offset="0" stopColor="#36c7b0" /><stop offset="1" stopColor="#1a8fe0" /></linearGradient></defs>
            <circle cx="18" cy="18" r="17.500" fill="url(#edge)" />
            <path d="M1 20C1 10 8 5 15 5c8 0 13 5 14 11H13c0 6 6 10 12 9 3 0 6-1 8-3-2 8-9 13-16 13C8 35 1 28 1 20z" fill="#0c59a4" />
            <path d="M13 18h14c0-4-3-7-7-7s-7 3-7 7z" fill="#d2e3ef" />
            <path d="M10 18c0 8 6 13 13 12-8 5-17-1-17-9 0-3 1-6 4-8z" fill="#2a8fe0" />
          </svg>
        </TaskSlot>
        <TaskSlot>
          <svg width="34" height="36" viewBox="0 0 34 36">
            <path d="M10 7V4a3 3 0 0 1 3-3h8a3 3 0 0 1 3 3v3" fill="none" stroke="#2aa3e8" strokeWidth="2" />
            <path d="M1 6h32v27a3 3 0 0 1-3 3H4a3 3 0 0 1-3-3z" fill="#0f3f7d" />
            <rect x="11" y="14" width="5.500" height="5.500" fill="#f25022" />
            <rect x="17.500" y="14" width="5.500" height="5.500" fill="#7fba00" />
            <rect x="11" y="20.500" width="5.500" height="5.500" fill="#00a4ef" />
            <rect x="17.500" y="20.500" width="5.500" height="5.500" fill="#ffb900" />
          </svg>
        </TaskSlot>
        <TaskSlot>
          <VeyonEye />
          <Indicator $w={7} $c="#7d8790" />
        </TaskSlot>
        <TaskSlot>
          <ActiveTile />
          <IconLayer><ChromeIcon /></IconLayer>
          <ChromeBadge>C</ChromeBadge>
          <Indicator $w={22} $c="#0f74d0" />
        </TaskSlot>
        <Tray>
          <TraySlot $w={45}><Ic s={18} c="#222" w={1.6} vb="0 0 18 18"><path d="m3 12 6-6 6 6" /></Ic></TraySlot>
          <TraySlot $w={44}><Ic s={24} c="#333" w={1.4} vb="0 0 24 24"><path d="M7 20a4.500 4.500 0 0 1-.5-9A6 6 0 0 1 18 10a5 5 0 0 1 0 10z" fill="#8a8f94" /><path d="m5 2 15 21" /></Ic></TraySlot>
          <TraySlot $w={43}><Ic s={24} c="#333" w={1.3} vb="0 0 24 24"><path d="M17 2c2-1 5 1 4 4L11 19l-4-3zM7 16c-2 2-3 4-2 6M11 19c-1 2-3 3-5 3" /><path d="M14 6l3 3" /></Ic></TraySlot>
          <TraySlot $w={44}><Ic s={24} c="#222" w={1.3} vb="0 0 24 24"><path d="M15 15H2V2h14M9 15v5M5 21h8" /><rect x="18" y="1" width="5" height="8" rx="1" /><path d="M20.500 9v13" /></Ic></TraySlot>
          <TraySlot $w={24}><Ic s={24} c="#222" w={1.3} vb="0 0 24 24"><path d="M3 9v6h4l6 5V4L7 9zM16 9c1 2 1 4 0 6M19 6c2 4 2 8 0 12" /></Ic></TraySlot>
          <Clock>10:09<br />10/10/2025</Clock>
          <TraySlot $w={44}><Ic s={22} c="#222" w={1.3} vb="0 0 22 22"><path d="M11 4c-3 0-5 2-5 5v5l-2 3h14l-2-3V9c0-3-2-5-5-5zM9 19a2 2 0 0 0 4 0M9 9h4l-4 4h4M15 2h3l-3 3h3" /></Ic></TraySlot>
        </Tray>
      </TaskBar>
    </Page>
  );
}
